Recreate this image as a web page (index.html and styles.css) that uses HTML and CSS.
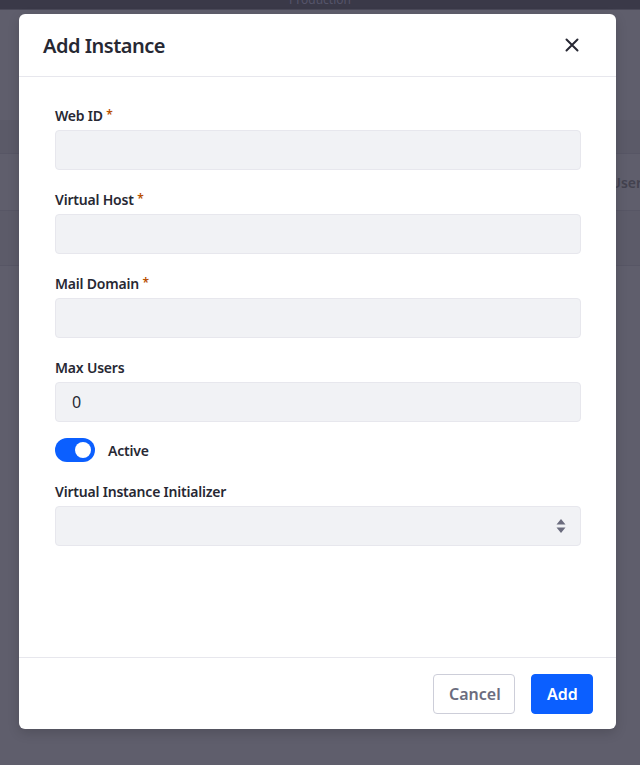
FILE: index.html
```html
<!DOCTYPE html>
<html lang="en">
<head>
<meta charset="utf-8">
<title>Add Instance</title>
<link rel="stylesheet" href="styles.css">
</head>
<body>
<div class="page">
  <div class="topbar"><span class="topbar-title">Production</span></div>
  <div class="page-body">
    <div class="table-head"></div>
    <div class="table-row"><span class="col-text">Users</span></div>
    <div class="table-row short"></div>
  </div>
</div>

<div class="modal" role="dialog">
  <div class="modal-header">
    <h1 class="modal-title">Add Instance</h1>
    <button class="close" aria-label="Close">
      <svg width="16" height="16" viewBox="0 0 16 16"><path d="M2.5 2.5 L13.5 13.5 M13.5 2.5 L2.5 13.5" stroke="#272833" stroke-width="2" stroke-linecap="round" fill="none"/></svg>
    </button>
  </div>
  <div class="modal-body">
    <div class="form-group">
      <label class="label">Web ID <span class="req">*</span></label>
      <div class="input"></div>
    </div>
    <div class="form-group">
      <label class="label">Virtual Host <span class="req">*</span></label>
      <div class="input"></div>
    </div>
    <div class="form-group">
      <label class="label">Mail Domain <span class="req">*</span></label>
      <div class="input"></div>
    </div>
    <div class="form-group">
      <label class="label">Max Users</label>
      <div class="input">0</div>
    </div>
    <div class="toggle-row">
      <span class="toggle"><span class="knob"></span></span>
      <span class="toggle-label">Active</span>
    </div>
    <div class="form-group">
      <label class="label">Virtual Instance Initializer</label>
      <div class="input select">
        <svg class="caret" width="10" height="16" viewBox="0 0 10 16"><path d="M5 1 L9.5 6.5 H0.5 Z M5 15 L9.5 9.5 H0.5 Z" fill="#6b6c7e"/></svg>
      </div>
    </div>
  </div>
  <div class="modal-footer">
    <button class="btn btn-secondary">Cancel</button>
    <button class="btn btn-primary">Add</button>
  </div>
</div>
</body>
</html>
```
FILE: styles.css
```css
html, body {
  margin: 0;
  padding: 0;
}
body {
  width: 640px;
  height: 765px;
  overflow: hidden;
  background: #5f5e6c;
  font-family: "Noto Sans", "Open Sans", sans-serif;
  color: #272833;
  position: relative;
}
.page {
  height: 100%;
  display: flex;
  flex-direction: column;
}
.topbar {
  height: 9px;
  background: #3a3948;
  display: flex;
  justify-content: center;
  align-items: flex-end;
  overflow: hidden;
  border-bottom: 1px solid #4a4958;
}
.topbar-title {
  color: #55546a;
  font-size: 12px;
  line-height: 12px;
  margin-bottom: 3px;
}
.page-body {
  padding-top: 110px;
}
.table-head {
  height: 33px;
  background: #5b5a68;
  border-bottom: 1px solid #575665;
}
.table-row {
  height: 56px;
  border-bottom: 1px solid #575665;
  display: flex;
  justify-content: flex-end;
  align-items: center;
}
.table-row.short {
  height: 54px;
  background: #5c5b69;
}
.col-text {
  color: #43424f;
  font-size: 14px;
  font-weight: 600;
  margin-right: -9px;
}

.modal {
  position: absolute;
  left: 19px;
  top: 14px;
  width: 597px;
  height: 715px;
  background: #fff;
  border-radius: 6px;
  display: flex;
  flex-direction: column;
  box-shadow: 0 4px 12px rgba(0,0,0,0.15);
}
.modal-header {
  height: 62px;
  border-bottom: 1px solid #e7e7ed;
  display: flex;
  align-items: center;
  justify-content: space-between;
  padding: 0 24px;
}
.modal-title {
  margin: 0;
  font-size: 20px;
  font-weight: 600;
  letter-spacing: -0.5px;
  color: #272833;
}
.close {
  border: 0;
  background: none;
  padding: 0;
  width: 24px;
  height: 24px;
  display: flex;
  align-items: center;
  justify-content: center;
  margin-right: 8px;
}
.modal-body {
  flex: 1;
  padding: 29px 35px 0 36px;
}
.form-group {
  margin-bottom: 20px;
}
.label {
  display: block;
  font-size: 14px;
  font-weight: 600;
  line-height: 20px;
  letter-spacing: -0.2px;
  margin-bottom: 4px;
  color: #272833;
}
.req {
  color: #b95000;
  font-size: 12px;
  vertical-align: top;
  line-height: 18px;
}
.input {
  height: 38px;
  background: #f1f2f5;
  border: 1px solid #e7e7ed;
  border-radius: 4px;
  padding: 0 16px;
  display: flex;
  align-items: center;
  font-size: 16px;
  color: #272833;
}
.select {
  justify-content: flex-end;
  padding-right: 14px;
}
.toggle-row {
  display: flex;
  align-items: center;
  gap: 13px;
  margin-top: -4px;
  margin-bottom: 20px;
}
.toggle {
  width: 40px;
  height: 24px;
  border-radius: 12px;
  background: #0b5fff;
  position: relative;
  display: inline-block;
}
.knob {
  position: absolute;
  right: 4px;
  top: 4px;
  width: 16px;
  height: 16px;
  border-radius: 50%;
  background: #fff;
}
.toggle-label {
  font-size: 14px;
  font-weight: 600;
  letter-spacing: -0.2px;
  color: #272833;
}
.modal-footer {
  height: 71px;
  border-top: 1px solid #e7e7ed;
  display: flex;
  align-items: center;
  justify-content: flex-end;
  gap: 16px;
  padding: 0 23px 0 24px;
}
.btn {
  height: 40px;
  border-radius: 4px;
  font-family: inherit;
  font-size: 16px;
  font-weight: 600;
  padding: 0 15px;
  cursor: pointer;
}
.btn-secondary {
  width: 82px;
  background: #fff;
  border: 1px solid #cdced9;
  color: #6b6c7e;
}
.btn-primary {
  width: 62px;
  background: #0b5fff;
  border: 1px solid #0b5fff;
  color: #fff;
}
```
